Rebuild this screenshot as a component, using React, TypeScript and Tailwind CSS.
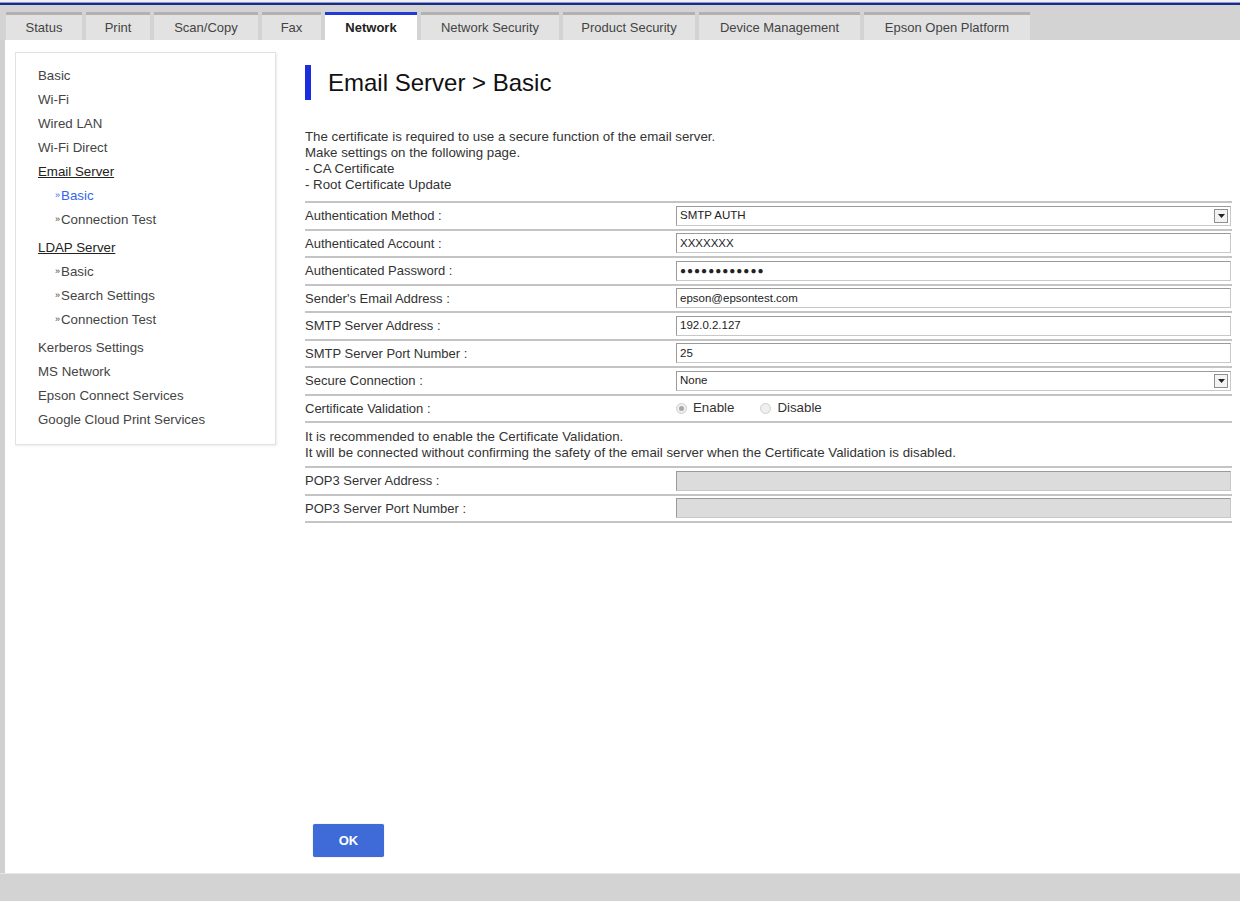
import React from "react";

const tabs = [
  { label: "Status", w: "w-[76px]" },
  { label: "Print", w: "w-[64px]" },
  { label: "Scan/Copy", w: "w-[104px]" },
  { label: "Fax", w: "w-[59px]" },
  { label: "Network", w: "w-[92px]", active: true },
  { label: "Network Security", w: "w-[138px]" },
  { label: "Product Security", w: "w-[132px]" },
  { label: "Device Management", w: "w-[161px]" },
  { label: "Epson Open Platform", w: "w-[166px]" },
];

type NavItem = { label: string; head?: boolean; sub?: { label: string; active?: boolean }[] };

const nav: NavItem[] = [
  { label: "Basic" },
  { label: "Wi-Fi" },
  { label: "Wired LAN" },
  { label: "Wi-Fi Direct" },
  {
    label: "Email Server",
    head: true,
    sub: [{ label: "Basic", active: true }, { label: "Connection Test" }],
  },
  {
    label: "LDAP Server",
    head: true,
    sub: [{ label: "Basic" }, { label: "Search Settings" }, { label: "Connection Test" }],
  },
  { label: "Kerberos Settings" },
  { label: "MS Network" },
  { label: "Epson Connect Services" },
  { label: "Google Cloud Print Services" },
];

const Arrow = () => (
  <span className="absolute right-[2px] top-[2px] flex h-[14px] w-[14px] items-center justify-center border border-[#8f8f8f] bg-[#f3f3f3]">
    <svg width="7" height="4" viewBox="0 0 7 4">
      <path d="M0 0h7L3.5 4z" fill="#222" />
    </svg>
  </span>
);

const Field = ({
  value,
  select,
  disabled,
  dots,
}: {
  value?: string;
  select?: boolean;
  disabled?: boolean;
  dots?: boolean;
}) => (
  <div
    className={`relative flex h-[20px] w-full items-center border border-t-[#9a9a9a] border-l-[#9a9a9a] border-r-[#c8c8c8] border-b-[#c8c8c8] pl-[3px] text-[#222] ${
      dots ? "text-[10px] tracking-[1px]" : "text-[11.5px]"
    } ${disabled ? "bg-[#dcdcdc]" : "bg-white"}`}
  >
    {value}
    {select && <Arrow />}
  </div>
);

const Radio = ({ checked, label }: { checked?: boolean; label: string }) => (
  <span className="flex items-center gap-[6px]">
    <span className="flex h-[11px] w-[11px] items-center justify-center rounded-full border border-[#cfcfcf] bg-[#efefef]">
      {checked && <span className="h-[5px] w-[5px] rounded-full bg-[#a8a8a8]" />}
    </span>
    <span className="text-[13.3px] text-[#333]">{label}</span>
  </span>
);

const Row = ({ label, children }: { label: string; children: React.ReactNode }) => (
  <div className="flex h-[27.5px] items-center border-b-2 border-[#c4c4c4]">
    <div className="w-[371px] shrink-0 text-[13px] text-[#333]">{label}</div>
    <div className="flex flex-1 items-center pr-[1px]">{children}</div>
  </div>
);

export default function App() {
  return (
    <div
      className="flex h-[901px] w-[1240px] flex-col overflow-hidden bg-white"
      style={{ fontFamily: '"Liberation Sans", Arial, sans-serif' }}
    >
      {/* top rule */}
      <div className="h-[2px] bg-[#eef0f6]" />
      <div className="h-[1px] bg-[#8c98d2]" />
      <div className="h-[2px] bg-[#1d2a82]" />

      {/* tab strip */}
      <div className="flex h-[35px] items-end gap-[4px] bg-[#d3d3d3] pl-[6px]">
        {tabs.map((t) => (
          <div
            key={t.label}
            className={`flex h-[28px] items-center justify-center border-t-[3px] text-[13px] ${t.w} ${
              t.active
                ? "border-[#2139d6] bg-white font-bold text-[#222]"
                : "border-[#b1b1b1] bg-[#e2e2e2] text-[#444]"
            }`}
          >
            {t.label}
          </div>
        ))}
      </div>

      <div className="flex flex-1">
        <div className="w-[5px] shrink-0 bg-[#d0d0d0]" />

        {/* side menu */}
        <div className="ml-[10px] mt-[12px] self-start">
          <div className="w-[261px] border border-[#e2e2e2] pb-[12px] pl-[22px] pt-[11px] shadow-[1px_1px_2px_rgba(0,0,0,0.08)]">
            {nav.map((n) => (
              <div key={n.label} className={n.sub ? "mb-[4px]" : ""}>
                <div
                  className={`flex h-[24px] items-center text-[13.3px] ${
                    n.head ? "text-[#222] underline" : "text-[#444]"
                  }`}
                >
                  {n.label}
                </div>
                {n.sub?.map((s) => (
                  <div
                    key={s.label}
                    className={`flex h-[24px] items-center pl-[17px] text-[13.3px] ${
                      s.active ? "text-[#3366ee]" : "text-[#444]"
                    }`}
                  >
                    <span className="mr-[1px] text-[9px]">»</span>
                    {s.label}
                  </div>
                ))}
              </div>
            ))}
          </div>
        </div>

        {/* main */}
        <div className="ml-[29px] mr-[8px] flex flex-1 flex-col">
          <div className="mt-[25px] flex h-[35px] items-center gap-[17px]">
            <div className="h-[35px] w-[6px] bg-[#1a2ee0]" />
            <h1 className="text-[24px] leading-none text-[#111]">Email Server &gt; Basic</h1>
          </div>

          <div className="mt-[29px] text-[13.3px] leading-[16px] text-[#333]">
            <p>The certificate is required to use a secure function of the email server.</p>
            <p>Make settings on the following page.</p>
            <p>- CA Certificate</p>
            <p>- Root Certificate Update</p>
          </div>

          <div className="mt-[8px] border-t-2 border-[#c4c4c4]">
            <Row label="Authentication Method :">
              <Field value="SMTP AUTH" select />
            </Row>
            <Row label="Authenticated Account :">
              <Field value="XXXXXXX" />
            </Row>
            <Row label="Authenticated Password :">
              <Field value="●●●●●●●●●●●●" dots />
            </Row>
            <Row label="Sender's Email Address :">
              <Field value="epson@epsontest.com" />
            </Row>
            <Row label="SMTP Server Address :">
              <Field value="192.0.2.127" />
            </Row>
            <Row label="SMTP Server Port Number :">
              <Field value="25" />
            </Row>
            <Row label="Secure Connection :">
              <Field value="None" select />
            </Row>
            <Row label="Certificate Validation :">
              <div className="flex items-center gap-[26px]">
                <Radio checked label="Enable" />
                <Radio label="Disable" />
              </div>
            </Row>
          </div>

          <div className="mt-[6px] text-[13.3px] leading-[16px] text-[#333]">
            <p>It is recommended to enable the Certificate Validation.</p>
            <p>It will be connected without confirming the safety of the email server when the Certificate Validation is disabled.</p>
          </div>

          <div className="mt-[5px] border-t-2 border-[#c4c4c4]">
            <Row label="POP3 Server Address :">
              <Field disabled />
            </Row>
            <Row label="POP3 Server Port Number :">
              <Field disabled />
            </Row>
          </div>

          <div className="mt-auto pb-[16px] pl-[8px]">
            <button className="flex h-[33px] w-[71px] items-center justify-center rounded-[2px] bg-[#3e6bd7] text-[13px] font-bold text-white shadow-[0_0_1px_rgba(0,0,0,0.4)]">
              OK
            </button>
          </div>
        </div>
      </div>

      {/* footer strip */}
      <div className="h-[28px] border-t border-[#e6e6e6] bg-[#d3d3d3]" />
    </div>
  );
}
